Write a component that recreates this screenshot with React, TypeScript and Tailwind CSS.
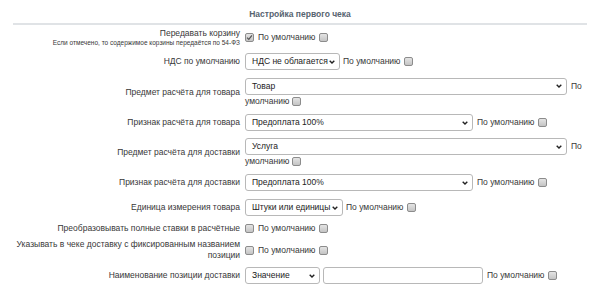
import React from "react"

const FONT = { fontFamily: '"Liberation Sans", Arial, sans-serif' }

function Check({ checked = false }: { checked?: boolean }) {
  return (
    <span className="inline-flex items-center justify-center w-[9px] h-[9px] rounded-[2px] border border-[#8c8c8c] bg-gradient-to-b from-[#e4e4e4] to-[#c4c4c4] align-middle shrink-0">
      {checked && (
        <svg width="7" height="7" viewBox="0 0 8 8">
          <path d="M1.2 4.2l2 2 3.6-4.6" fill="none" stroke="#555" strokeWidth="1.4" />
        </svg>
      )}
    </span>
  )
}

function Select({ value, w }: { value: string; w: string }) {
  return (
    <span
      className={`inline-flex items-center justify-between h-[17px] border border-[#b8b8b8] rounded-[3px] bg-white pl-[6px] pr-[4px] text-[#222] align-middle shrink-0 ${w}`}
    >
      <span>{value}</span>
      <svg width="6" height="4" viewBox="0 0 6 4">
        <path d="M0.7 0.7l2.3 2.3 2.3-2.3" fill="none" stroke="#222" strokeWidth="1.4" />
      </svg>
    </span>
  )
}

function Default({ gap = "ml-[3px]" }: { gap?: string }) {
  return (
    <span className={`inline-flex items-center gap-[4px] ${gap}`}>
      <span>По умолчанию</span>
      <Check />
    </span>
  )
}

function Row({ label, h, children }: { label: React.ReactNode; h: string; children: React.ReactNode }) {
  return (
    <div className={`flex items-center ${h}`}>
      <div className="w-[229px] shrink-0 text-right pr-[2px] leading-[11px]">{label}</div>
      <div className="ml-[3px] flex-1">{children}</div>
    </div>
  )
}

export default function App() {
  return (
    <div className="w-[600px] h-[299px] bg-white text-[8.5px] text-[#383838] overflow-hidden" style={FONT}>
      <div className="px-[13px]">
        <div className="h-[23px] flex items-end justify-center pb-[2px] font-bold text-[#56636f]">
          Настройка первого чека
        </div>
        <div className="h-[2px] bg-[#e0e3e6]" />

        <Row
          h="h-[24px]"
          label={
            <div>
              <div>Передавать корзину</div>
              <div className="text-[6.5px] leading-[8px]">Если отмечено, то содержимое корзины передаётся по 54-ФЗ</div>
            </div>
          }
        >
          <div className="flex items-center">
            <Check checked />
            <Default gap="ml-[4px]" />
          </div>
        </Row>

        <Row h="h-[25px]" label="НДС по умолчанию">
          <div className="flex items-center">
            <Select value="НДС не облагается" w="w-[95px]" />
            <Default />
          </div>
        </Row>

        <Row h="h-[36px]" label="Предмет расчёта для товара">
          <div className="leading-[11px]">
            <div className="flex items-center">
              <Select value="Товар" w="w-[322px]" />
              <span className="ml-[4px]">По</span>
            </div>
            <div className="flex items-center gap-[3px] mt-[1px]">
              <span>умолчанию</span>
              <Check />
            </div>
          </div>
        </Row>

        <Row h="h-[25px]" label="Признак расчёта для товара">
          <div className="flex items-center">
            <Select value="Предоплата 100%" w="w-[228px]" />
            <Default gap="ml-[4px]" />
          </div>
        </Row>

        <Row h="h-[35px]" label="Предмет расчёта для доставки">
          <div className="leading-[11px]">
            <div className="flex items-center">
              <Select value="Услуга" w="w-[322px]" />
              <span className="ml-[4px]">По</span>
            </div>
            <div className="flex items-center gap-[3px] mt-[1px]">
              <span>умолчанию</span>
              <Check />
            </div>
          </div>
        </Row>

        <Row h="h-[25px]" label="Признак расчёта для доставки">
          <div className="flex items-center">
            <Select value="Предоплата 100%" w="w-[228px]" />
            <Default gap="ml-[4px]" />
          </div>
        </Row>

        <Row h="h-[25px]" label="Единица измерения товара">
          <div className="flex items-center">
            <Select value="Штуки или единицы" w="w-[98px]" />
            <Default />
          </div>
        </Row>

        <Row h="h-[17px]" label="Преобразовывать полные ставки в расчётные">
          <div className="flex items-center">
            <Check />
            <Default gap="ml-[4px]" />
          </div>
        </Row>

        <Row h="h-[26px]" label="Указывать в чеке доставку с фиксированным названием позиции">
          <div className="flex items-center">
            <Check />
            <Default gap="ml-[4px]" />
          </div>
        </Row>

        <Row h="h-[25px]" label="Наименование позиции доставки">
          <div className="flex items-center">
            <Select value="Значение" w="w-[75px]" />
            <span className="ml-[3px] h-[17px] w-[160px] border border-[#b8b8b8] rounded-[3px] bg-white shrink-0" />
            <Default gap="ml-[4px]" />
          </div>
        </Row>
      </div>
    </div>
  )
}
